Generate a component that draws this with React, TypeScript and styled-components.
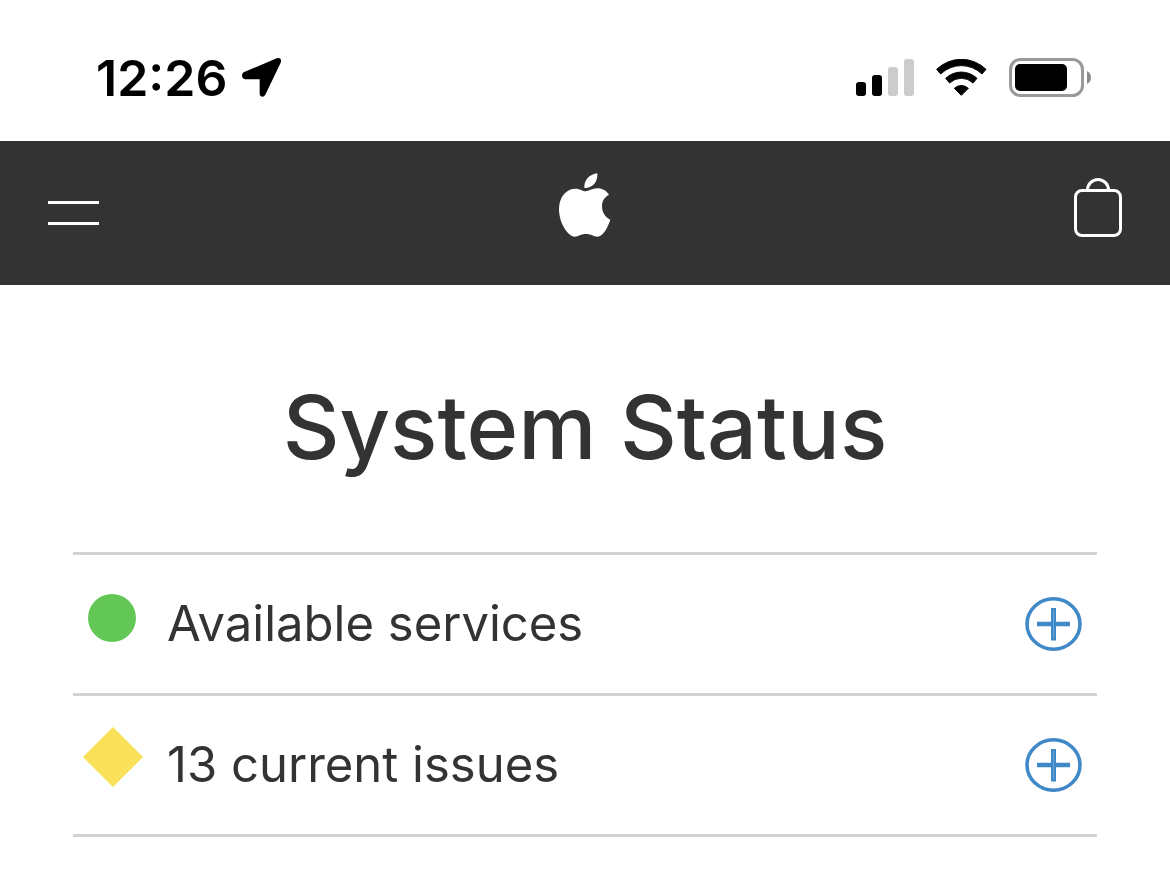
import React from "react";
import styled, { createGlobalStyle } from "styled-components";

const GlobalStyle = createGlobalStyle`
  * { box-sizing: border-box; }
  body {
    margin: 0;
    background: #fff;
    color: #333;
    font-family: Inter, "Liberation Sans", sans-serif;
  }
`;

const StatusBar = styled.div`
  display: flex;
  align-items: center;
  justify-content: space-between;
  height: 141px;
  padding: 14px 79px 0 96px;
  color: #000;
`;

const Group = styled.div<{ $gap: number }>`
  display: flex;
  align-items: center;
  gap: ${(p) => p.$gap}px;
`;

const Time = styled.time`
  font-size: 50px;
  line-height: 60px;
  font-weight: 600;
`;

const Nav = styled.nav`
  display: grid;
  grid-template-columns: 1fr auto 1fr;
  align-items: center;
  height: 144px;
  padding: 0 48px;
  background: #333;
  color: #fff;
`;

const IconButton = styled.button`
  display: flex;
  padding: 0;
  border: 0;
  background: none;
  color: inherit;
  cursor: pointer;
`;

const HomeLink = styled.a`
  display: flex;
  padding-bottom: 16px;
  color: inherit;
`;

const BagLink = styled.a`
  display: flex;
  justify-self: end;
  padding-bottom: 10px;
  color: inherit;
`;

const Main = styled.main`
  padding: 88px 73px 34px;
`;

const Title = styled.h1`
  margin: 0 0 71px;
  font-size: 88px;
  line-height: 108px;
  font-weight: 500;
  text-align: center;
`;

const List = styled.ul`
  margin: 0;
  padding: 0;
  list-style: none;
  border-top: 3px solid #d2d2d2;
`;

const Row = styled.li`
  display: flex;
  align-items: center;
  height: 141px;
  padding: 0 15px 0 8px;
  border-bottom: 3px solid #d2d2d2;
`;

const Marker = styled.span`
  display: flex;
  justify-content: center;
  width: 62px;
  margin-right: 24px;
  padding-bottom: 12px;
`;

const Label = styled.span`
  flex: 1;
  font-size: 49px;
  line-height: 60px;
`;

const ExpandButton = styled(IconButton)`
  color: #4089c8;
`;

const LocationIcon = () => (
  <svg width="39" height="39" viewBox="486 57 117 117" fill="currentColor" aria-hidden="true">
    <path d="M491 100 L590 58 Q605 54 603 69 L556 167 Q552 174 546 173 Q539 171 539 164 V121 H496 Q487 120 486 110 Q486 103 491 100Z" />
  </svg>
);

const SignalIcon = () => (
  <svg width="58" height="37" viewBox="0 0 58 37" aria-label="Signal">
    <rect x="0" y="23" width="10" height="14" rx="3" />
    <rect x="16" y="16" width="10" height="21" rx="3" />
    <rect x="32" y="8" width="10" height="29" rx="3" fill="#ccc" />
    <rect x="48" y="0" width="10" height="37" rx="3" fill="#ccc" />
  </svg>
);

const WifiIcon = () => (
  <svg width="51" height="37" viewBox="288 57 153 111" aria-label="Wi-Fi" strokeLinejoin="round" stroke="#000" strokeWidth="3">
    <path d="M290 88 A106 106 0 0 1 438 88 L426 102 A89 89 0 0 0 302 102Z" />
    <path d="M317 115 A68 68 0 0 1 411 115 L399 129 A50 50 0 0 0 329 129Z" />
    <path d="M343 145 A30 30 0 0 1 385 145 L364 166Z" />
  </svg>
);

const BatteryIcon = () => (
  <svg width="82" height="39" viewBox="0 0 82 39" aria-label="Battery">
    <rect x="1.5" y="1.5" width="72" height="36" rx="10" fill="none" stroke="#999" strokeWidth="3" />
    <rect x="6" y="6" width="52" height="27" rx="5" />
    <path d="M78 13 Q82 15 82 19.500 Q82 24 78 26Z" fill="#8c8c8c" />
  </svg>
);

const MenuIcon = () => (
  <svg width="51" height="24" viewBox="0 0 51 24" fill="currentColor" aria-hidden="true">
    <rect width="51" height="3" />
    <rect y="21" width="51" height="3" />
  </svg>
);

const AppleLogo = () => (
  <svg width="54" height="64" viewBox="54 40 162 192" fill="currentColor" aria-hidden="true">
    <path d="M211 180 C205 199 190 231 172 231 C160 231 154 223 138 223 C121 223 117 231 104 231 C84 231 57 190 57 149 C57 108 82 87 106 87 C120 87 128 95 137 95 C146 95 156 86 173 86 C187 86 199 93 207 105 C193 113 186 124 186 140 C186 159 197 174 211 180Z" />
    <path d="M172 41 C174 66 158 86 133 85 C131 62 148 44 172 41Z" />
  </svg>
);

const BagIcon = () => (
  <svg width="48" height="60" viewBox="0 0 48 60" fill="none" stroke="currentColor" strokeWidth="3" aria-hidden="true">
    <rect x="1.5" y="12.5" width="45" height="45" rx="6.5" />
    <path d="M13.5 12 A10.500 10.500 0 0 1 34.500 12" />
  </svg>
);

const PlusIcon = () => (
  <svg width="57" height="54" viewBox="0 0 57 54" fill="none" stroke="currentColor" aria-hidden="true">
    <ellipse cx="28.5" cy="27" rx="26.5" ry="25.2" strokeWidth="3.6" />
    <path d="M12 27 H45" strokeWidth="4.5" />
    <path d="M28.5 11 V43.500" strokeWidth="5" />
    <path d="M28.500 13 V41" stroke="#6ba4d6" strokeWidth="1" />
  </svg>
);

const AvailableMark = () => (
  <svg width="48" height="48" viewBox="0 0 48 48" aria-hidden="true">
    <circle cx="24" cy="24" r="24" fill="#63c756" />
  </svg>
);

const IssueMark = () => (
  <svg width="64" height="66" viewBox="0 0 64 66" aria-hidden="true">
    <path d="M33 0 L64 31 L33 62 L2 31Z" fill="#f9e15b" />
  </svg>
);

const services = [
  { label: "Available services", mark: <AvailableMark /> },
  { label: "13 current issues", mark: <IssueMark /> },
];

export default function App() {
  return (
    <>
      <GlobalStyle />
      <StatusBar>
        <Group $gap={15}>
          <Time>12:26</Time>
          <LocationIcon />
        </Group>
        <Group $gap={22}>
          <SignalIcon />
          <WifiIcon />
          <BatteryIcon />
        </Group>
      </StatusBar>
      <Nav aria-label="Global">
        <IconButton aria-label="Menu">
          <MenuIcon />
        </IconButton>
        <HomeLink href="#" aria-label="Apple">
          <AppleLogo />
        </HomeLink>
        <BagLink href="#" aria-label="Shopping Bag">
          <BagIcon />
        </BagLink>
      </Nav>
      <Main>
        <Title>System Status</Title>
        <List>
          {services.map((s, i) => (
            <Row key={s.label}>
              <Marker>{s.mark}</Marker>
              <Label id={`service-${i}`}>{s.label}</Label>
              <ExpandButton aria-label="Expand" aria-describedby={`service-${i}`} aria-expanded={false}>
                <PlusIcon />
              </ExpandButton>
            </Row>
          ))}
        </List>
      </Main>
    </>
  );
}
